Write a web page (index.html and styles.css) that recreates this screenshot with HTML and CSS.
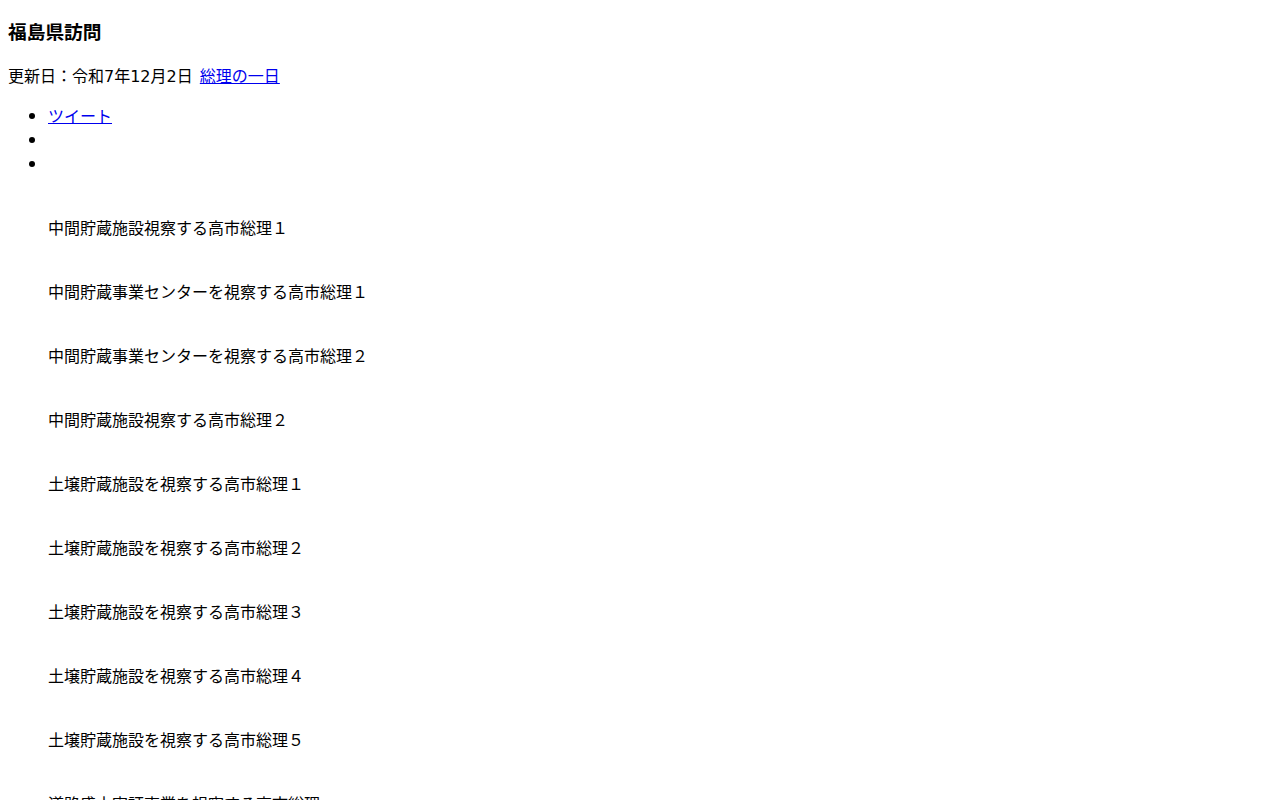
FILE: index.html
```html
<!DOCTYPE html>
<html lang="ja">
<head>
<meta charset="utf-8">
<title>福島県訪問</title>
<link rel="stylesheet" href="styles.css">
</head>
<body>
<h3 class="title">福島県訪問</h3>
<p class="meta">更新日：令和7年12月2日 <a href="#">総理の一日</a></p>
<ul class="share">
  <li><a href="#">ツイート</a></li>
  <li><span class="empty"></span></li>
  <li><span class="empty"></span></li>
</ul>
<figure class="photo"><div class="img"></div><figcaption>中間貯蔵施設視察する高市総理１</figcaption></figure>
<figure class="photo"><div class="img"></div><figcaption>中間貯蔵事業センターを視察する高市総理１</figcaption></figure>
<figure class="photo"><div class="img"></div><figcaption>中間貯蔵事業センターを視察する高市総理２</figcaption></figure>
<figure class="photo"><div class="img"></div><figcaption>中間貯蔵施設視察する高市総理２</figcaption></figure>
<figure class="photo"><div class="img"></div><figcaption>土壌貯蔵施設を視察する高市総理１</figcaption></figure>
<figure class="photo"><div class="img"></div><figcaption>土壌貯蔵施設を視察する高市総理２</figcaption></figure>
<figure class="photo"><div class="img"></div><figcaption>土壌貯蔵施設を視察する高市総理３</figcaption></figure>
<figure class="photo"><div class="img"></div><figcaption>土壌貯蔵施設を視察する高市総理４</figcaption></figure>
<figure class="photo"><div class="img"></div><figcaption>土壌貯蔵施設を視察する高市総理５</figcaption></figure>
<figure class="photo"><div class="img"></div><figcaption>道路盛土実証事業を視察する高市総理</figcaption></figure>
<figure class="photo"><div class="img"></div><figcaption>道路盛土実証事業を視察する高市総理２</figcaption></figure>
</body>
</html>
```

FILE: styles.css
```css
body {
  margin: 0;
  padding: 8px;
  font-family: "Noto Sans CJK JP", "Noto Sans", sans-serif;
  font-size: 16px;
  color: #000;
  background: #fff;
}
a { color: #0000ee; }
.title {
  font-size: 18.72px;
  font-weight: bold;
  line-height: 28px;
  margin: 9px 0 18px;
}
.meta {
  margin: 18px 0 14px;
  line-height: 24px;
  font-family: "DejaVu Sans", "Noto Sans CJK JP", sans-serif;
}
.meta a {
  margin-left: 2px;
  font-family: "Noto Sans CJK JP", sans-serif;
}
.share {
  margin: 14px 0 16px;
  padding-left: 40px;
  line-height: 24px;
}
.share li { height: 24px; }
.photo {
  margin: 16px 40px;
  line-height: 24px;
}
.photo .img { height: 24px; }
```
